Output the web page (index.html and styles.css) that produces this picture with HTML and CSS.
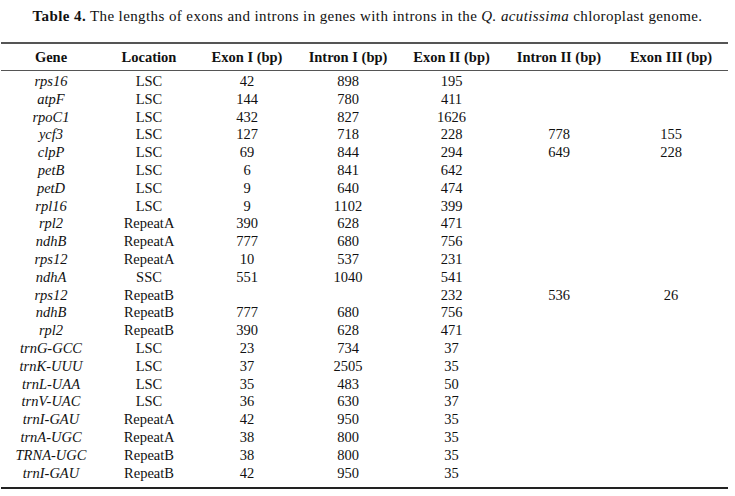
FILE: index.html
```html
<!DOCTYPE html>
<html>
<head>
<meta charset="utf-8">
<link rel="stylesheet" href="styles.css">
</head>
<body>
<p class="caption"><b>Table 4.</b> The lengths of exons and introns in genes with introns in the <i>Q. acutissima</i> chloroplast genome.</p>
<table class="data">
<colgroup>
<col class="c1"><col class="c2"><col class="c3"><col class="c4"><col class="c5"><col class="c6"><col class="c7">
</colgroup>
<thead>
<tr><th>Gene</th><th>Location</th><th>Exon I (bp)</th><th>Intron I (bp)</th><th>Exon II (bp)</th><th>Intron II (bp)</th><th>Exon III (bp)</th></tr>
</thead>
<tbody>
<tr class="first"><td class="g">rps16</td><td>LSC</td><td>42</td><td>898</td><td>195</td><td></td><td></td></tr>
<tr><td class="g">atpF</td><td>LSC</td><td>144</td><td>780</td><td>411</td><td></td><td></td></tr>
<tr><td class="g">rpoC1</td><td>LSC</td><td>432</td><td>827</td><td>1626</td><td></td><td></td></tr>
<tr><td class="g">ycf3</td><td>LSC</td><td>127</td><td>718</td><td>228</td><td>778</td><td>155</td></tr>
<tr><td class="g">clpP</td><td>LSC</td><td>69</td><td>844</td><td>294</td><td>649</td><td>228</td></tr>
<tr><td class="g">petB</td><td>LSC</td><td>6</td><td>841</td><td>642</td><td></td><td></td></tr>
<tr><td class="g">petD</td><td>LSC</td><td>9</td><td>640</td><td>474</td><td></td><td></td></tr>
<tr><td class="g">rpl16</td><td>LSC</td><td>9</td><td>1102</td><td>399</td><td></td><td></td></tr>
<tr><td class="g">rpl2</td><td>RepeatA</td><td>390</td><td>628</td><td>471</td><td></td><td></td></tr>
<tr><td class="g">ndhB</td><td>RepeatA</td><td>777</td><td>680</td><td>756</td><td></td><td></td></tr>
<tr><td class="g">rps12</td><td>RepeatA</td><td>10</td><td>537</td><td>231</td><td></td><td></td></tr>
<tr><td class="g">ndhA</td><td>SSC</td><td>551</td><td>1040</td><td>541</td><td></td><td></td></tr>
<tr><td class="g">rps12</td><td>RepeatB</td><td></td><td></td><td>232</td><td>536</td><td>26</td></tr>
<tr><td class="g">ndhB</td><td>RepeatB</td><td>777</td><td>680</td><td>756</td><td></td><td></td></tr>
<tr><td class="g">rpl2</td><td>RepeatB</td><td>390</td><td>628</td><td>471</td><td></td><td></td></tr>
<tr><td class="g">trnG-GCC</td><td>LSC</td><td>23</td><td>734</td><td>37</td><td></td><td></td></tr>
<tr><td class="g">trnK-UUU</td><td>LSC</td><td>37</td><td>2505</td><td>35</td><td></td><td></td></tr>
<tr><td class="g">trnL-UAA</td><td>LSC</td><td>35</td><td>483</td><td>50</td><td></td><td></td></tr>
<tr><td class="g">trnV-UAC</td><td>LSC</td><td>36</td><td>630</td><td>37</td><td></td><td></td></tr>
<tr><td class="g">trnI-GAU</td><td>RepeatA</td><td>42</td><td>950</td><td>35</td><td></td><td></td></tr>
<tr><td class="g">trnA-UGC</td><td>RepeatA</td><td>38</td><td>800</td><td>35</td><td></td><td></td></tr>
<tr><td class="g">TRNA-UGC</td><td>RepeatB</td><td>38</td><td>800</td><td>35</td><td></td><td></td></tr>
<tr class="last"><td class="g">trnI-GAU</td><td>RepeatB</td><td>42</td><td>950</td><td>35</td><td></td><td></td></tr>
</tbody>
</table>
</body>
</html>
```
FILE: styles.css
```css
html, body {
  margin: 0;
  padding: 0;
  background: #ffffff;
}
body {
  font-family: "Liberation Serif", "Times New Roman", serif;
  color: #111111;
  font-size: 14.5px;
}
.caption {
  margin: 0;
  padding-top: 7px;
  height: 42px;
  box-sizing: border-box;
  text-align: center;
  font-size: 15px;
  line-height: 18px;
  letter-spacing: 0.4px;
}
.data {
  margin-left: 1px;
  width: 727px;
  border-collapse: collapse;
  table-layout: fixed;
  border-top: 2px solid #555555;
  border-bottom: 2px solid #222222;
}
.c1 { width: 100px; }
.c2 { width: 96px; }
.c3 { width: 100px; }
.c4 { width: 102px; }
.c5 { width: 105px; }
.c6 { width: 110px; }
.c7 { width: 114px; }
.data th {
  font-weight: bold;
  font-size: 14.5px;
  text-align: center;
  height: 26px;
  padding: 0;
  border-bottom: 1.5px solid #555555;
  line-height: 18px;
}
.data td {
  text-align: center;
  padding: 0;
  height: 17.8px;
  line-height: 17.8px;
}
.data td.g {
  font-style: italic;
}
.data tr.first td {
  padding-top: 2px;
}
.data tr.last td {
  padding-bottom: 5px;
}
```
